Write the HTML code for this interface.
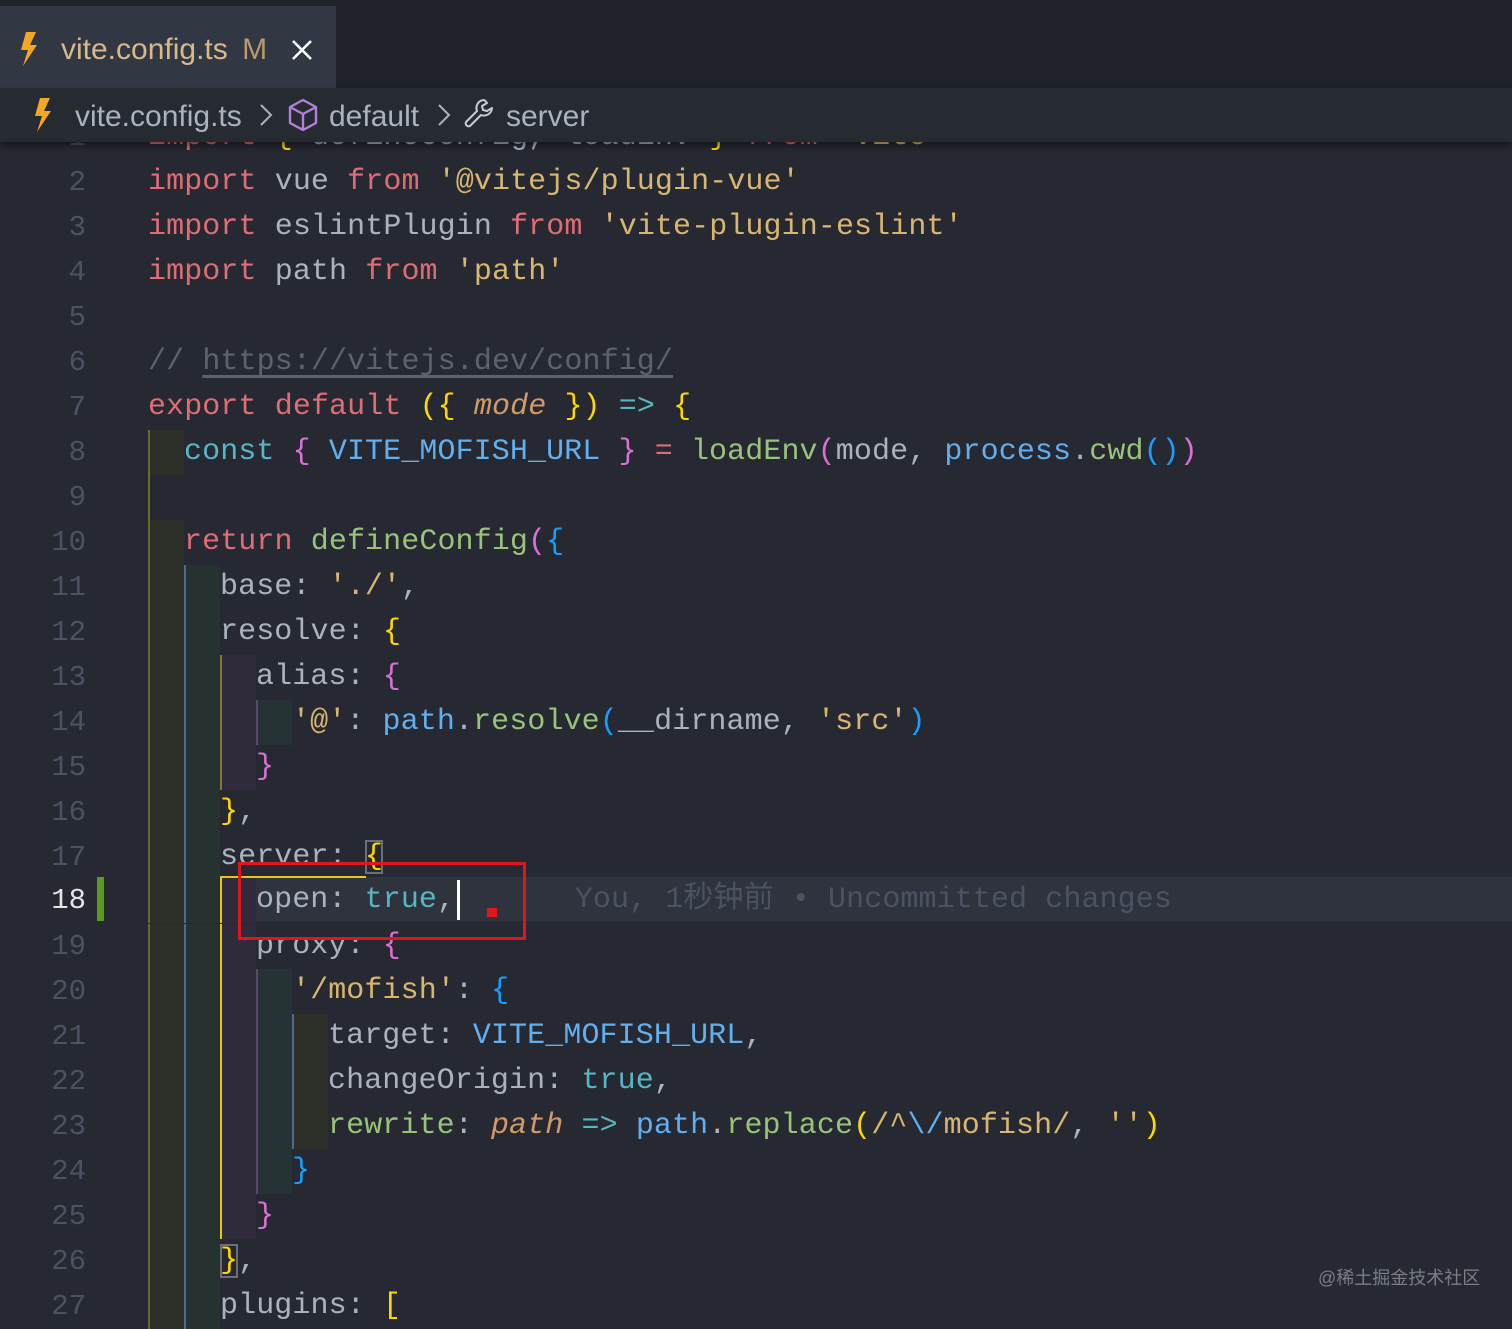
<!DOCTYPE html>
<html><head><meta charset="utf-8"><style>
html,body{margin:0;padding:0}
body{width:1512px;height:1320px;background:#262932;position:relative;overflow:hidden;font-family:"Liberation Mono","Noto Sans CJK SC",monospace;}
.tabbar{position:absolute;left:0;top:0;width:1512px;height:88px;background:#1f2228}
.tab{position:absolute;left:0;top:6px;width:336px;height:82px;background:#323843;font-family:"Liberation Sans",sans-serif;font-size:30px;color:#d7b98a}
.bc{position:absolute;left:0;top:88px;width:1512px;height:54px;background:#262a31;box-shadow:0 4px 6px rgba(0,0,0,.45);z-index:5;font-family:"Liberation Sans",sans-serif;font-size:30px;color:#abb2bf}
.code{position:absolute;left:0;top:2px;width:1512px;height:1320px}
.ln{position:absolute;left:0;width:86px;text-align:right;font-size:29px;line-height:45px;height:45px;color:#4b5263}
.l{position:absolute;left:148px;height:45px;line-height:45px;font-size:30px;white-space:pre;color:#abb2bf;letter-spacing:0.1px}
.i{display:inline-block;width:36px;height:45px;vertical-align:top;box-sizing:border-box;border-left:2px solid transparent}
.a{background:#2d3029;border-left-color:#6e6a2c}
.b{background:#263230;border-left-color:#4a6b8f}
.c{background:#302b3a;border-left-color:#8a7535}
.c2{background:#302b3a;border-left-color:#e6c619}
.d{background:#263335;border-left-color:#5a4a6a}
.e{background:#2d3029;border-left-color:#4a6b8f}
.k{color:#e06c75}.s{color:#d9b670}.f{color:#98c379}.v{color:#61afef}.t{color:#56b6c2}.p{color:#d19a66;font-style:italic}
.y{color:#ffd700}.m{color:#da70d6}.u{color:#179fff}.cm{color:#5c6370}
</style></head><body>
<div class="tabbar"><div class="tab">
<svg style="position:absolute;left:18px;top:26px" width="22" height="34" viewBox="0 0 22 34"><path d="M8 0h10l-6 13h7L5 34l5-16H3z" fill="#f5a623"/></svg>
<span style="position:absolute;left:61px;top:27px">vite.config.ts <span style="color:#b89a6e;margin-left:6px">M</span></span>
<svg style="position:absolute;left:291px;top:33px" width="22" height="22" viewBox="0 0 22 22"><path d="M2 2L20 20M20 2L2 20" stroke="#fff" stroke-width="2.6"/></svg>
</div></div>
<div class="bc">
<svg style="position:absolute;left:32px;top:10px" width="22" height="34" viewBox="0 0 22 34"><path d="M8 0h10l-6 13h7L5 34l5-16H3z" fill="#f5a623"/></svg>
<span style="position:absolute;left:75px;top:12px">vite.config.ts</span>
<svg style="position:absolute;left:259px;top:15px" width="14" height="24" viewBox="0 0 14 24"><path d="M2 2l10 10L2 22" stroke="#abb2bf" stroke-width="2" fill="none"/></svg>
<svg style="position:absolute;left:287px;top:10px" width="32" height="34" viewBox="0 0 32 34"><path d="M16 2L29 9v16L16 32 3 25V9z M3 9l13 7 13-7 M16 16v16" stroke="#b180d7" stroke-width="2.4" fill="none" stroke-linejoin="round"/></svg>
<span style="position:absolute;left:329px;top:12px">default</span>
<svg style="position:absolute;left:437px;top:15px" width="14" height="24" viewBox="0 0 14 24"><path d="M2 2l10 10L2 22" stroke="#abb2bf" stroke-width="2" fill="none"/></svg>
<svg style="position:absolute;left:462px;top:9px" width="34" height="34" viewBox="0 0 34 34"><path d="M22 3a8 8 0 0 0-7 11L4 25a3 3 0 0 0 4 4l11-11a8 8 0 0 0 11-7l-5 3-4-1-1-4 5-3a8 8 0 0 0-3-3z" stroke="#c8ccd4" stroke-width="2" fill="none" stroke-linejoin="round"/></svg>
<span style="position:absolute;left:506px;top:12px">server</span>
</div>

<div class="code">
<div style="position:absolute;left:148px;top:875px;width:1364px;height:44px;background:#2f333d"></div>

<div class="ln" style="top:113px">1</div><div class="l" style="top:113px"><span class="k">import</span> <span class="y">{</span> defineConfig, loadEnv <span class="y">}</span> <span class="k">from</span> <span class="s">'vite'</span></div>
<div class="ln" style="top:158px">2</div><div class="l" style="top:158px"><span class="k">import</span> vue <span class="k">from</span> <span class="s">'@vitejs/plugin-vue'</span></div>
<div class="ln" style="top:203px">3</div><div class="l" style="top:203px"><span class="k">import</span> eslintPlugin <span class="k">from</span> <span class="s">'vite-plugin-eslint'</span></div>
<div class="ln" style="top:248px">4</div><div class="l" style="top:248px"><span class="k">import</span> path <span class="k">from</span> <span class="s">'path'</span></div>
<div class="ln" style="top:293px">5</div>
<div class="ln" style="top:338px">6</div><div class="l" style="top:338px"><span class="cm">// <span style="text-decoration:underline;text-underline-offset:6px">https://vitejs.dev/config/</span></span></div>
<div class="ln" style="top:383px">7</div><div class="l" style="top:383px"><span class="k">export</span> <span class="k">default</span> <span class="y">({</span> <span class="p">mode</span> <span class="y">})</span> <span class="t">=&gt;</span> <span class="y">{</span></div>
<div class="ln" style="top:428px">8</div><div class="l" style="top:428px"><span class="i a"></span><span class="t">const</span> <span class="m">{</span> <span class="v">VITE_MOFISH_URL</span> <span class="m">}</span> <span class="k">=</span> <span class="f">loadEnv</span><span class="m">(</span>mode, <span class="v">process</span>.<span class="f">cwd</span><span class="u">()</span><span class="m">)</span></div>
<div class="ln" style="top:473px">9</div><div class="l" style="top:473px"><span class="i" style="border-left-color:#6e6a2c"></span></div>
<div class="ln" style="top:518px">10</div><div class="l" style="top:518px"><span class="i a"></span><span class="k">return</span> <span class="f">defineConfig</span><span class="m">(</span><span class="u">{</span></div>
<div class="ln" style="top:563px">11</div><div class="l" style="top:563px"><span class="i a"></span><span class="i b"></span>base: <span class="s">'./'</span>,</div>
<div class="ln" style="top:608px">12</div><div class="l" style="top:608px"><span class="i a"></span><span class="i b"></span>resolve: <span class="y">{</span></div>
<div class="ln" style="top:653px">13</div><div class="l" style="top:653px"><span class="i a"></span><span class="i b"></span><span class="i c"></span>alias: <span class="m">{</span></div>
<div class="ln" style="top:698px">14</div><div class="l" style="top:698px"><span class="i a"></span><span class="i b"></span><span class="i c"></span><span class="i d"></span><span class="s">'@'</span>: <span class="v">path</span>.<span class="f">resolve</span><span class="u">(</span>__dirname, <span class="s">'src'</span><span class="u">)</span></div>
<div class="ln" style="top:743px">15</div><div class="l" style="top:743px"><span class="i a"></span><span class="i b"></span><span class="i c"></span><span class="m">}</span></div>
<div class="ln" style="top:788px">16</div><div class="l" style="top:788px"><span class="i a"></span><span class="i b"></span><span class="y">}</span>,</div>
<div class="ln" style="top:833px">17</div><div class="l" style="top:833px"><span class="i a"></span><span class="i b"></span>server: <span class="y" style="outline:2px solid #6b6f78;outline-offset:-2px">{</span></div>
<div class="ln" style="top:876px;color:#e6e6e6">18</div><div style="position:absolute;left:97px;top:875px;width:7px;height:44px;background:#5a9a1e"></div>
<div class="l" style="top:876px"><span class="i a"></span><span class="i b"></span><span class="i c2"></span>open: <span class="t">true</span>,<span style="display:inline-block;width:3px;height:40px;background:#fff;vertical-align:top;margin-top:2px;margin-left:2px"></span>      <span style="color:#4b5263;margin-left:6px">You, 1秒钟前 • Uncommitted changes</span></div>
<div style="position:absolute;left:220px;top:874px;width:146px;height:2px;background:#e6c619"></div>
<div class="ln" style="top:922px">19</div><div class="l" style="top:922px"><span class="i a"></span><span class="i b"></span><span class="i c2"></span>proxy: <span class="m">{</span></div>
<div class="ln" style="top:967px">20</div><div class="l" style="top:967px"><span class="i a"></span><span class="i b"></span><span class="i c2"></span><span class="i d"></span><span class="s">'/mofish'</span>: <span class="u">{</span></div>
<div class="ln" style="top:1012px">21</div><div class="l" style="top:1012px"><span class="i a"></span><span class="i b"></span><span class="i c2"></span><span class="i d"></span><span class="i e"></span>target: <span class="v">VITE_MOFISH_URL</span>,</div>
<div class="ln" style="top:1057px">22</div><div class="l" style="top:1057px"><span class="i a"></span><span class="i b"></span><span class="i c2"></span><span class="i d"></span><span class="i e"></span>changeOrigin: <span class="t">true</span>,</div>
<div class="ln" style="top:1102px">23</div><div class="l" style="top:1102px"><span class="i a"></span><span class="i b"></span><span class="i c2"></span><span class="i d"></span><span class="i e"></span><span class="f">rewrite</span>: <span class="p">path</span> <span class="t">=&gt;</span> <span class="v">path</span>.<span class="f">replace</span><span class="y">(</span><span class="s">/^</span><span class="v">\/</span><span class="s">mofish/</span>, <span class="s">''</span><span class="y">)</span></div>
<div class="ln" style="top:1147px">24</div><div class="l" style="top:1147px"><span class="i a"></span><span class="i b"></span><span class="i c2"></span><span class="i d"></span><span class="u">}</span></div>
<div class="ln" style="top:1192px">25</div><div class="l" style="top:1192px"><span class="i a"></span><span class="i b"></span><span class="i c2"></span><span class="m">}</span></div>
<div class="ln" style="top:1237px">26</div><div class="l" style="top:1237px"><span class="i a"></span><span class="i b"></span><span class="y" style="outline:2px solid #6b6f78;outline-offset:-2px">}</span>,</div>
<div class="ln" style="top:1282px">27</div><div class="l" style="top:1282px"><span class="i a"></span><span class="i b"></span>plugins: <span class="y">[</span></div>
</div>

<div style="position:absolute;left:238px;top:862px;width:282px;height:72px;border:3px solid #e0161e"></div>
<div style="position:absolute;left:487px;top:908px;width:10px;height:9px;background:#e0161e"></div>
<div style="position:absolute;left:1318px;top:1264px;font-family:'Liberation Sans','Noto Sans CJK SC',sans-serif;font-size:18px;color:#7a7d84">@稀土掘金技术社区</div>
</body></html>
